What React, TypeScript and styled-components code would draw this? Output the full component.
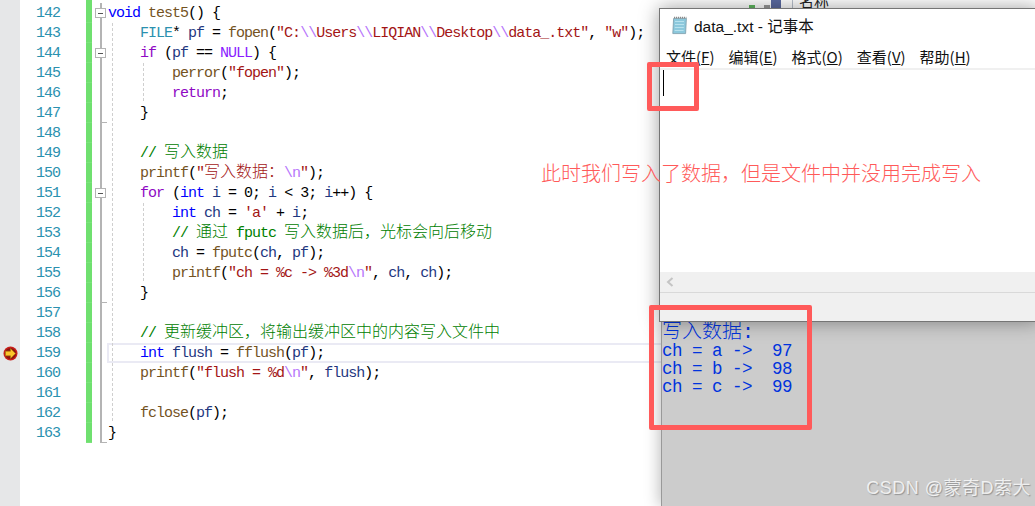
import { ReactNode } from "react";
import styled, { createGlobalStyle } from "styled-components";

type Kind = "plain" | "kw" | "ctl" | "fn" | "var" | "type" | "macro" | "str" | "esc" | "cmt";
type Tok = [Kind, string];
type Fold = "open" | "line" | "end" | "none";

interface Line {
  no: number;
  fold: Fold;
  guides: number;
  current?: boolean;
  toks: Tok[];
}

const tokenColors: Record<Kind, string> = {
  plain: "#000000",
  kw: "#0000ff",
  ctl: "#8f08c4",
  fn: "#74531f",
  var: "#1f377f",
  type: "#2b91af",
  macro: "#8a1bff",
  str: "#a31515",
  esc: "#b776fb",
  cmt: "#008000",
};

const lines: Line[] = [
  { no: 142, fold: "open", guides: 0, toks: [["kw", "void"], ["plain", " "], ["fn", "test5"], ["plain", "() {"]] },
  {
    no: 143, fold: "line", guides: 1,
    toks: [
      ["plain", "    "], ["type", "FILE"], ["plain", "* "], ["var", "pf"], ["plain", " = "], ["fn", "fopen"], ["plain", "("],
      ["str", '"C:'], ["esc", "\\\\"], ["str", "Users"], ["esc", "\\\\"], ["str", "LIQIAN"], ["esc", "\\\\"], ["str", "Desktop"],
      ["esc", "\\\\"], ["str", 'data_.txt"'], ["plain", ", "], ["str", '"w"'], ["plain", ");"],
    ],
  },
  {
    no: 144, fold: "open", guides: 1,
    toks: [["plain", "    "], ["ctl", "if"], ["plain", " ("], ["var", "pf"], ["plain", " == "], ["macro", "NULL"], ["plain", ") {"]],
  },
  { no: 145, fold: "line", guides: 2, toks: [["plain", "        "], ["fn", "perror"], ["plain", "("], ["str", '"fopen"'], ["plain", ");"]] },
  { no: 146, fold: "line", guides: 2, toks: [["plain", "        "], ["ctl", "return"], ["plain", ";"]] },
  { no: 147, fold: "end", guides: 1, toks: [["plain", "    }"]] },
  { no: 148, fold: "line", guides: 1, toks: [] },
  { no: 149, fold: "line", guides: 1, toks: [["plain", "    "], ["cmt", "// 写入数据"]] },
  {
    no: 150, fold: "line", guides: 1,
    toks: [["plain", "    "], ["fn", "printf"], ["plain", "("], ["str", '"写入数据：'], ["esc", "\\n"], ["str", '"'], ["plain", ");"]],
  },
  {
    no: 151, fold: "open", guides: 1,
    toks: [
      ["plain", "    "], ["ctl", "for"], ["plain", " ("], ["kw", "int"], ["plain", " "], ["var", "i"], ["plain", " = 0; "],
      ["var", "i"], ["plain", " < 3; "], ["var", "i"], ["plain", "++) {"],
    ],
  },
  {
    no: 152, fold: "line", guides: 2,
    toks: [["plain", "        "], ["kw", "int"], ["plain", " "], ["var", "ch"], ["plain", " = "], ["str", "'a'"], ["plain", " + "], ["var", "i"], ["plain", ";"]],
  },
  { no: 153, fold: "line", guides: 2, toks: [["plain", "        "], ["cmt", "// 通过 fputc 写入数据后，光标会向后移动"]] },
  {
    no: 154, fold: "line", guides: 2,
    toks: [["plain", "        "], ["var", "ch"], ["plain", " = "], ["fn", "fputc"], ["plain", "("], ["var", "ch"], ["plain", ", "], ["var", "pf"], ["plain", ");"]],
  },
  {
    no: 155, fold: "line", guides: 2,
    toks: [
      ["plain", "        "], ["fn", "printf"], ["plain", "("], ["str", '"ch = %c -> %3d'], ["esc", "\\n"], ["str", '"'],
      ["plain", ", "], ["var", "ch"], ["plain", ", "], ["var", "ch"], ["plain", ");"],
    ],
  },
  { no: 156, fold: "end", guides: 1, toks: [["plain", "    }"]] },
  { no: 157, fold: "line", guides: 1, toks: [] },
  { no: 158, fold: "line", guides: 1, toks: [["plain", "    "], ["cmt", "// 更新缓冲区，将输出缓冲区中的内容写入文件中"]] },
  {
    no: 159, fold: "line", guides: 1, current: true,
    toks: [["plain", "    "], ["kw", "int"], ["plain", " "], ["var", "flush"], ["plain", " = "], ["fn", "fflush"], ["plain", "("], ["var", "pf"], ["plain", ");"]],
  },
  {
    no: 160, fold: "line", guides: 1,
    toks: [["plain", "    "], ["fn", "printf"], ["plain", "("], ["str", '"flush = %d'], ["esc", "\\n"], ["str", '"'], ["plain", ", "], ["var", "flush"], ["plain", ");"]],
  },
  { no: 161, fold: "line", guides: 1, toks: [] },
  { no: 162, fold: "line", guides: 1, toks: [["plain", "    "], ["fn", "fclose"], ["plain", "("], ["var", "pf"], ["plain", ");"]] },
  { no: 163, fold: "end", guides: 0, toks: [["plain", "}"]] },
];

const menus: [string, string][] = [
  ["文件", "F"],
  ["编辑", "E"],
  ["格式", "O"],
  ["查看", "V"],
  ["帮助", "H"],
];

const consoleRows = ["ch = a ->  97", "ch = b ->  98", "ch = c ->  99"];

function withCjk(text: string): ReactNode[] {
  return text.split(/([\u3000-\u9fff\uff00-\uffef]+)/).map((part, i) => (i % 2 ? <Cjk key={i}>{part}</Cjk> : part));
}

function BreakpointArrow() {
  return (
    <svg width="15" height="15" viewBox="0 0 15 15">
      <circle cx="7.5" cy="7.5" r="7" fill="#c8201a" />
      <circle cx="7.5" cy="7.5" r="5.6" fill="#8e1410" />
      <path d="M2.5 5.2h5V2.6l5 4.9-5 4.9V9.8h-5z" fill="#fcc62c" stroke="#a8780c" strokeWidth="0.6" />
    </svg>
  );
}

function NotepadIcon() {
  return (
    <svg width="20" height="20" viewBox="0 0 20 20">
      <path d="M3.6 3.4h12.8l-.8 15.2H2.8z" fill="#8cc8dc" stroke="#7a9aa8" strokeWidth="0.8" />
      <path d="M5 6.5h9M5 9.5h9M4.8 12.5h9M4.6 15.5h9" stroke="#b8e2ee" strokeWidth="1" />
      <path d="M4 2.6h12.4" stroke="#8a8a8a" strokeWidth="1.8" strokeDasharray="1.2 0.8" />
    </svg>
  );
}

function Chevron() {
  return (
    <svg width="8" height="10" viewBox="0 0 8 10">
      <path d="M6.5 1 2 5l4.5 4" fill="none" stroke="#c4c4c4" strokeWidth="2" />
    </svg>
  );
}

export default function App() {
  return (
    <>
      <GlobalStyle />
      <Stage>
        <Editor>
          <Gutter>
            {lines.map((l) => (
              <GutterCell key={l.no}>{l.current && <BreakpointArrow />}</GutterCell>
            ))}
          </Gutter>
          <Numbers>
            {lines.map((l) => (
              <Number key={l.no}>{l.no}</Number>
            ))}
          </Numbers>
          <ChangeBar>
            {lines.map((l) => (
              <ChangeCell key={l.no} />
            ))}
          </ChangeBar>
          <FoldColumn>
            {lines.map((l) => (
              <FoldCell key={l.no} $kind={l.fold}>
                {l.fold === "open" && <FoldBox />}
              </FoldCell>
            ))}
          </FoldColumn>
          <Code>
            {lines.map((l) => (
              <CodeRow key={l.no} $guides={l.guides} $current={l.current}>
                {l.toks.map(([kind, text], i) => (
                  <Token key={i} $kind={kind}>
                    {withCjk(text)}
                  </Token>
                ))}
              </CodeRow>
            ))}
          </Code>
        </Editor>

        <BackWindow>
          <BackMark $color="#5fb85f" $width={6} $height={3} />
          <BackMark $color="#9a9a9a" $width={6} $height={3} />
          <BackTab />
          <BackDivider />
          <BackLabel>名称</BackLabel>
        </BackWindow>

        <ConsoleWindow>
          <ConsoleHead>写入数据:</ConsoleHead>
          {consoleRows.map((row) => (
            <ConsoleRow key={row}>{row}</ConsoleRow>
          ))}
        </ConsoleWindow>

        <Notepad>
          <TitleBar>
            <NotepadIcon />
            <span>data_.txt - 记事本</span>
          </TitleBar>
          <MenuBar>
            {menus.map(([label, key]) => (
              <MenuItem key={key}>
                {label}(<u>{key}</u>)
              </MenuItem>
            ))}
          </MenuBar>
          <TextArea>
            <Caret />
          </TextArea>
          <ScrollBar>
            <Chevron />
          </ScrollBar>
          <StatusBar />
        </Notepad>

        <Annotation>此时我们写入了数据，但是文件中并没用完成写入</Annotation>
        <Callout $left={647} $top={62} $width={52} $height={49} />
        <Callout $left={649} $top={305} $width={163} $height={125} />
        <Watermark>CSDN @蒙奇D索大</Watermark>
      </Stage>
    </>
  );
}

const GlobalStyle = createGlobalStyle`
  html, body {
    margin: 0;
    padding: 0;
    background: #ffffff;
    overflow: hidden;
  }
`;

const Stage = styled.div`
  position: relative;
  width: 1035px;
  height: 506px;
  overflow: hidden;
`;

const Editor = styled.div`
  display: flex;
  height: 100%;
  font-family: "Liberation Mono", monospace;
  font-size: 15px;
  letter-spacing: -1px;
`;

const Gutter = styled.div`
  width: 20px;
  padding-top: 3px;
  background: #e6e7e8;
`;

const GutterCell = styled.div`
  height: 20px;
  display: flex;
  align-items: center;
  justify-content: center;
`;

const Numbers = styled.div`
  width: 40px;
  padding-top: 3px;
  margin-right: 26px;
`;

const Number = styled.div`
  height: 20px;
  line-height: 21px;
  text-align: right;
  color: #2b91af;
`;

const ChangeBar = styled.div`
  width: 6px;
  height: 443px;
  padding-top: 3px;
  box-sizing: border-box;
  background: #6fe06f;
`;

const ChangeCell = styled.div`
  height: 20px;
  box-sizing: border-box;
  border-bottom: 1px solid #7be47b;
`;

const FoldColumn = styled.div`
  width: 16px;
  padding-top: 3px;
`;

const FoldCell = styled.div<{ $kind: Fold }>`
  position: relative;
  height: 20px;
  box-sizing: border-box;

  &::before {
    content: "";
    position: absolute;
    left: 8px;
    top: 0;
    bottom: 0;
    width: 2px;
    background: #b4b4b4;
  }

  &::after {
    content: "";
    display: ${(p) => (p.$kind === "end" ? "block" : "none")};
    position: absolute;
    left: 8px;
    bottom: 0;
    width: 7px;
    height: 1px;
    background: #b4b4b4;
  }
`;

const FoldBox = styled.div`
  position: absolute;
  left: 3px;
  top: 5px;
  width: 11px;
  height: 10px;
  box-sizing: border-box;
  border: 1px solid #b4b4b4;
  background: linear-gradient(#555555, #555555) center / 5px 1px no-repeat #ffffff;
`;

const Code = styled.div`
  flex: 1;
  padding-top: 3px;
  min-width: 0;
`;

const CodeRow = styled.div<{ $guides: number; $current?: boolean }>`
  position: relative;
  height: 20px;
  line-height: 21px;
  white-space: pre;
  ${(p) => p.$current && "box-shadow: inset 0 0 0 2px #eaeaf4; margin-left: -1px; padding-left: 1px;"}

  &::before {
    content: "";
    display: ${(p) => (p.$guides >= 1 ? "block" : "none")};
    position: absolute;
    left: ${(p) => (p.$current ? 5 : 4)}px;
    top: 0;
    bottom: 0;
    width: 1px;
    background: repeating-linear-gradient(#cfcfcf 0 3px, transparent 3px 5px);
  }

  &::after {
    content: "";
    display: ${(p) => (p.$guides >= 2 ? "block" : "none")};
    position: absolute;
    left: 35px;
    top: 0;
    bottom: 0;
    width: 1px;
    background: repeating-linear-gradient(#cfcfcf 0 3px, transparent 3px 5px);
  }
`;

const Token = styled.span<{ $kind: Kind }>`
  color: ${(p) => tokenColors[p.$kind]};
`;

const Cjk = styled.span`
  font-family: "Liberation Mono", "Noto Sans CJK SC", sans-serif;
  font-size: 16px;
  font-weight: 300;
  letter-spacing: 0;
  line-height: 1;
`;

const BackWindow = styled.div`
  position: absolute;
  left: 749px;
  top: 0;
  right: 0;
  height: 8px;
  display: flex;
  align-items: flex-end;
  overflow: hidden;
`;

const BackMark = styled.div<{ $color: string; $width: number; $height: number }>`
  width: ${(p) => p.$width}px;
  height: ${(p) => p.$height}px;
  margin-right: 9px;
  background: ${(p) => p.$color};

  & + & {
    margin-right: 1px;
  }
`;

const BackTab = styled.div`
  width: 10px;
  height: 8px;
  background: #5b6aa0;
`;

const BackDivider = styled.div`
  width: 1px;
  height: 8px;
  margin: 0 6px 0 11px;
  background: #b8c0cc;
`;

const BackLabel = styled.div`
  align-self: flex-start;
  margin-top: -9px;
  font-family: "Noto Sans CJK SC", sans-serif;
  font-size: 15px;
  line-height: 20px;
  color: #222222;
`;

const ConsoleWindow = styled.div`
  position: absolute;
  left: 661px;
  top: 322px;
  right: 0;
  bottom: 0;
  box-sizing: border-box;
  background: #cccccc;
  border-left: 1px solid #999999;
  font-family: "Liberation Mono", monospace;
  font-size: 17.5px;
  letter-spacing: -0.5px;
  color: #0033dd;
  box-shadow: -2px 0 14px rgba(0, 0, 0, 0.25);
`;

const ConsoleHead = styled.div`
  height: 20px;
  line-height: 21px;
  font-family: "Liberation Mono", "Noto Sans CJK SC", sans-serif;
  font-size: 20px;
  font-weight: 300;
  letter-spacing: 0;
  white-space: pre;
`;

const ConsoleRow = styled.div`
  height: 18px;
  line-height: 18px;
  white-space: pre;
`;

const Notepad = styled.div`
  position: absolute;
  left: 659px;
  top: 8px;
  right: -4px;
  height: 314px;
  display: flex;
  flex-direction: column;
  box-sizing: border-box;
  border: 1px solid #757575;
  background: #ffffff;
  box-shadow: 0 0 18px rgba(0, 0, 0, 0.38);
  font-family: "Noto Sans CJK SC", "Liberation Sans", sans-serif;
  color: #111111;
`;

const TitleBar = styled.div`
  height: 32px;
  padding-bottom: 5px;
  display: flex;
  align-items: center;
  gap: 4px;
  padding-left: 10px;
  font-family: "Liberation Sans", "Noto Sans CJK SC", sans-serif;
  font-size: 15.5px;
`;

const MenuBar = styled.div`
  height: 22px;
  display: flex;
  gap: 14px;
  align-items: center;
  padding-left: 6px;
  font-size: 15px;
`;

const MenuItem = styled.span`
  line-height: 22px;
  white-space: pre;
`;

const TextArea = styled.div`
  flex: 1;
  padding-left: 3px;
  border-top: 2px solid #f0f0f0;
`;

const Caret = styled.div`
  width: 1px;
  height: 26px;
  background: #000000;
`;

const ScrollBar = styled.div`
  height: 20px;
  display: flex;
  align-items: center;
  padding-left: 6px;
  background: #f0f0f0;
`;

const StatusBar = styled.div`
  height: 28px;
  border-top: 1px solid #d9d9d9;
  background: #f0f0f0;
`;

const Annotation = styled.div`
  position: absolute;
  left: 541px;
  top: 160px;
  font-family: "Noto Sans CJK SC", sans-serif;
  font-size: 20px;
  line-height: 26px;
  font-weight: 300;
  white-space: nowrap;
  color: #ff5a5a;
`;

const Callout = styled.div<{ $left: number; $top: number; $width: number; $height: number }>`
  position: absolute;
  left: ${(p) => p.$left}px;
  top: ${(p) => p.$top}px;
  width: ${(p) => p.$width}px;
  height: ${(p) => p.$height}px;
  box-sizing: border-box;
  border: 5px solid #ff5a5a;
  border-radius: 2px;
`;

const Watermark = styled.div`
  position: absolute;
  right: 4px;
  top: 476px;
  font-family: "Liberation Sans", "Noto Sans CJK SC", sans-serif;
  font-size: 18px;
  line-height: 24px;
  letter-spacing: 0.5px;
  white-space: nowrap;
  color: rgba(255, 255, 255, 0.8);
  text-shadow: 1px 1px 1px rgba(110, 110, 110, 0.6);
`;
